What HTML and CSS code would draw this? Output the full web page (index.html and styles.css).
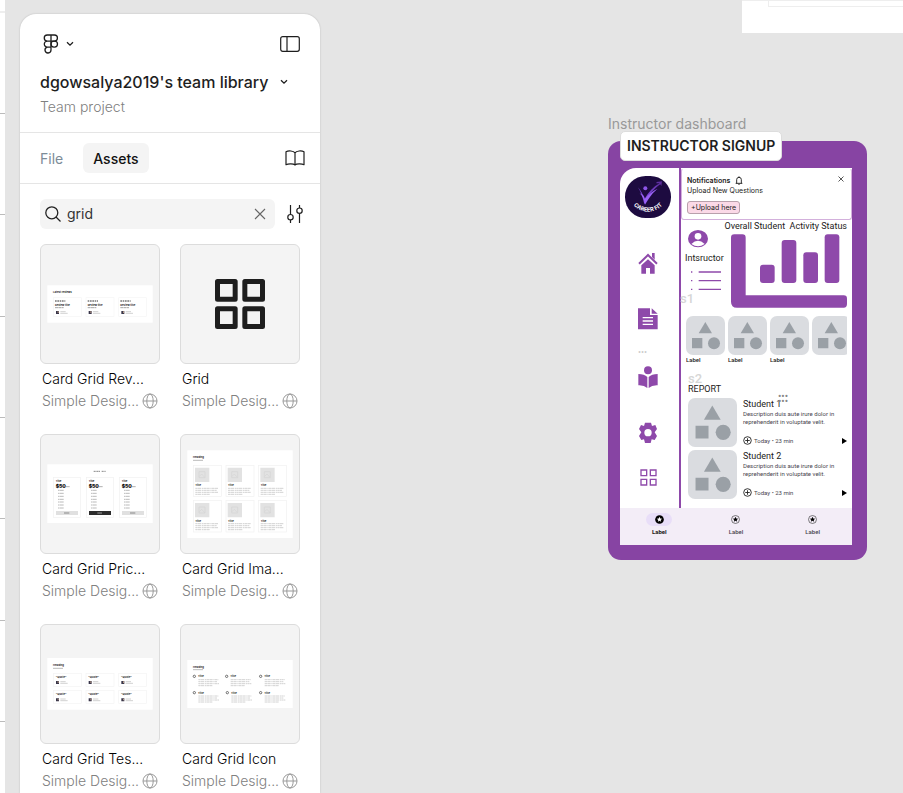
FILE: index.html
```html
<!DOCTYPE html>
<html lang="en">
<head>
<meta charset="utf-8">
<title>Team library</title>
<link rel="stylesheet" href="styles.css">
</head>
<body>
<svg class="defs" aria-hidden="true">
  <defs>
  <symbol id="chevron" viewBox="0 0 8 6"><path d="M1 1.2l3 3 3-3" fill="none" stroke="currentColor" stroke-width="1.3"/></symbol>
  <symbol id="globe" viewBox="0 0 16 16"><g fill="none" stroke="currentColor"><circle cx="8" cy="8" r="7"/><ellipse cx="8" cy="8" rx="3.2" ry="7"/><path d="M1 8h14"/></g></symbol>
  <symbol id="shapes" viewBox="0 0 117 117"><path d="M58 18l20 34H38z"/><path d="M18 66h31v31H18z"/><circle cx="84" cy="82" r="18"/></symbol>
  <symbol id="star" viewBox="0 0 26 26"><path d="M13 5l2.2 5.2 5.6.4-4.300 3.600 1.400 5.500L13 16.800l-4.900 2.900 1.400-5.500-4.300-3.600 5.600-.4z"/></symbol>
  <symbol id="plus" viewBox="0 0 26 26"><g fill="none" stroke="#222" stroke-width="2.600"><circle cx="13" cy="13" r="11"/><path d="M13 6.500v13M6.500 13h13"/></g></symbol>
  <g id="lines"><path d="M0 2h70M0 8h64M0 14h68M0 20h44" fill="none" stroke="#bbb" stroke-width="2" stroke-dasharray="7 1 10 2 4 1"/></g>
  <g id="person"><path d="M0 0h9v9H0z" fill="#39364a"/><path d="M5 1h3v5H5z" fill="#b99a84"/><path d="M13 2h16M13 7h22" stroke="#bbb" stroke-width="2"/></g>
  <g id="review"><rect width="84" height="56" fill="none" stroke="#f5f5f5" stroke-width="2"/><path d="M5 10h31" stroke="#333" stroke-width="3" stroke-dasharray="5 2"/><text x="5" y="25" class="t-title">Review title</text><path d="M5 30h26" stroke="#777" stroke-width="2" stroke-dasharray="9 1"/><use href="#person" x="8" y="40"/></g>
  <g id="price"><rect width="81" height="120" fill="none" stroke="#f1f1f1" stroke-width="2"/><text x="7" y="14" class="t-title">Title</text><text x="7" y="31" class="t-price">$50</text><path d="M37 28h12" stroke="#888" stroke-width="2"/><path d="M14 39h18M14 48h18M14 57h18M14 66h18M14 74h18M14 83h18M14 92h18" stroke="#999" stroke-width="2" stroke-dasharray="5 1 9 1"/></g>
  <g id="imagecard"><rect width="84" height="94" fill="none" stroke="#f1f1f1" stroke-width="2"/><path d="M5 7h43v43H5z" fill="#e2e2e2"/><path d="M17 19h18v18H17zM18 33l7-7 9 10" fill="none" stroke="#d5d5d5" stroke-width="2"/><text x="6" y="63" class="t-title">Title</text><use href="#lines" x="6" y="67"/></g>
  <g id="quote"><rect width="84" height="39" fill="none" stroke="#f4f4f4" stroke-width="2"/><text x="7" y="13" class="t-title">"Quote"</text><use href="#person" x="8" y="23"/></g>
  <g id="iconcard"><circle cx="4" cy="4" r="3.500" fill="none" stroke="#333" stroke-width="2"/><text x="15" y="7" class="t-title">Title</text><path d="M16 14h60M16 20h56M16 26h62M16 32h42" fill="none" stroke="#bbb" stroke-width="2" stroke-dasharray="7 1 10 2 4 1"/></g>
  </defs>
</svg>

<div class="neighbor" aria-hidden="true"></div>

<aside class="panel">
  <header class="head">
    <div class="toprow">
      <button class="icon-btn menu" aria-label="Main menu">
        <svg width="16" height="20" viewBox="0 0 16 20" fill="none" stroke="currentColor" stroke-width="1.300"><path d="M8 1H4.300a3 3 0 0 0 0 6.100H8zM8 1h3.400a3 3 0 0 1 0 6.100H8zM8 7.100H4.300a3 3 0 0 0 0 6H8zM8 13.100H4.300a3 3 0 1 0 3.700 3z"/><rect x="8" y="7.100" width="6.500" height="6" rx="3"/></svg>
        <svg width="8" height="6"><use href="#chevron"/></svg>
      </button>
      <button class="icon-btn" aria-label="Toggle sidebar">
        <svg width="20" height="16" viewBox="0 0 20 16" fill="none" stroke="currentColor" stroke-width="1.200"><rect x=".7" y=".7" width="18.600" height="14.600" rx="2"/><path d="M7 1v14"/></svg>
      </button>
    </div>
    <button class="icon-btn title">dgowsalya2019's team library <svg width="8" height="6"><use href="#chevron"/></svg></button>
    <p class="project">Team project</p>
  </header>

  <nav class="tabs">
    <button class="tab">File</button>
    <button class="tab active">Assets</button>
    <button class="icon-btn book" aria-label="Libraries">
      <svg width="20" height="16" viewBox="0 0 20 16" fill="none" stroke="currentColor" stroke-width="1.200" stroke-linejoin="round"><path d="M10 2.800C8.500.7 3.500.4 1 1.700v13c2.500-1.200 7.500-1 9 .3 1.500-1.300 6.500-1.500 9-.3v-13C16.500.4 11.500.7 10 2.800zV15"/></svg>
    </button>
  </nav>

  <div class="searchrow">
    <label class="search">
      <svg width="16" height="16" viewBox="0 0 16 16" fill="none" stroke="#222" stroke-width="1.300"><circle cx="6.800" cy="6.800" r="6"/><path d="M11 11l4.500 4.500"/></svg>
      <input type="text" value="grid" aria-label="Search assets">
      <button class="icon-btn clear" aria-label="Clear search"><svg width="12" height="12" viewBox="0 0 12 12" fill="none" stroke="currentColor" stroke-width="1.100"><path d="M1 1l10 10M11 1L1 11"/></svg></button>
    </label>
    <button class="icon-btn" aria-label="Filters">
      <svg width="16" height="18" viewBox="0 0 16 18" fill="none" stroke="currentColor" stroke-width="1.200"><path d="M3.500 0v9.500M3.500 15v3M12.500 0v3M12.500 8.500V18"/><circle cx="3.500" cy="12.200" r="2.700"/><circle cx="12.500" cy="5.700" r="2.700"/></svg>
    </button>
  </div>

  <ul class="assets">
    <li>
      <button class="thumb" aria-label="Card Grid Reviews"><svg viewBox="3 3 354 354"><rect x="22" y="124" width="316" height="112" fill="#fff"/><text x="39" y="147" class="t-title">Latest reviews</text><use href="#review" x="40" y="161"/><use href="#review" x="138" y="161"/><use href="#review" x="236" y="161"/></svg></button>
      <p class="name">Card Grid Rev...</p>
      <p class="lib">Simple Desig... <svg width="16" height="16"><use href="#globe"/></svg></p>
    </li>
    <li>
      <button class="thumb" aria-label="Grid"><svg viewBox="3 3 354 354"><g fill="none" stroke="#1e1e1e" stroke-width="15" stroke-linejoin="round"><path d="M112.500 112.500h53v53h-53zM194.500 112.500h53v53h-53zM112.500 194.500h53v53h-53zM194.500 194.500h53v53h-53z"/></g></svg></button>
      <p class="name">Grid</p>
      <p class="lib">Simple Desig... <svg width="16" height="16"><use href="#globe"/></svg></p>
    </li>
    <li>
      <button class="thumb" aria-label="Card Grid Pricing"><svg viewBox="3 3 354 354"><rect x="22" y="91" width="316" height="176" fill="#fff"/><path d="M161 112h19M185 112h12" stroke="#888" stroke-width="3" stroke-dasharray="4 1"/><use href="#price" x="40" y="130"/><use href="#price" x="139" y="130"/><use href="#price" x="238" y="130"/><path d="M48 231h66v12H48zM246 231h66v12h-66z" fill="#e0e0e0"/><path d="M147 231h66v12h-66z" fill="#2c2c2c"/><path d="M72 237h16M270 237h16" stroke="#888" stroke-width="3"/><path d="M172 237h14" stroke="#999" stroke-width="3"/></svg></button>
      <p class="name">Card Grid Pric...</p>
      <p class="lib">Simple Desig... <svg width="16" height="16"><use href="#globe"/></svg></p>
    </li>
    <li>
      <button class="thumb" aria-label="Card Grid Image"><svg viewBox="3 3 354 354"><rect x="22" y="49" width="316" height="263" fill="#fff"/><text x="39" y="73" class="t-title">Heading</text><path d="M39 79h30" stroke="#999" stroke-width="2"/><use href="#imagecard" x="40" y="94"/><use href="#imagecard" x="138" y="94"/><use href="#imagecard" x="236" y="94"/><use href="#imagecard" x="40" y="200"/><use href="#imagecard" x="138" y="200"/><use href="#imagecard" x="236" y="200"/></svg></button>
      <p class="name">Card Grid Ima...</p>
      <p class="lib">Simple Desig... <svg width="16" height="16"><use href="#globe"/></svg></p>
    </li>
    <li>
      <button class="thumb" aria-label="Card Grid Testimonials"><svg viewBox="3 3 354 354"><rect x="22" y="102" width="316" height="155" fill="#fff"/><text x="39" y="127" class="t-title">Heading</text><path d="M39 133h30" stroke="#999" stroke-width="2"/><use href="#quote" x="40" y="148"/><use href="#quote" x="138" y="148"/><use href="#quote" x="236" y="148"/><use href="#quote" x="40" y="200"/><use href="#quote" x="138" y="200"/><use href="#quote" x="236" y="200"/></svg></button>
      <p class="name">Card Grid Tes...</p>
      <p class="lib">Simple Desig... <svg width="16" height="16"><use href="#globe"/></svg></p>
    </li>
    <li>
      <button class="thumb" aria-label="Card Grid Icon"><svg viewBox="3 3 354 354"><rect x="22" y="108" width="316" height="144" fill="#fff"/><text x="39" y="131" class="t-title">Heading</text><path d="M39 137h30" stroke="#999" stroke-width="2"/><use href="#iconcard" x="39" y="153"/><use href="#iconcard" x="136" y="153"/><use href="#iconcard" x="238" y="153"/><use href="#iconcard" x="39" y="202"/><use href="#iconcard" x="138" y="202"/><use href="#iconcard" x="238" y="202"/></svg></button>
      <p class="name">Card Grid Icon</p>
      <p class="lib">Simple Desig... <svg width="16" height="16"><use href="#globe"/></svg></p>
    </li>
  </ul>
</aside>

<main class="canvas">
  <div class="sheet"><div class="sheet-edge"></div></div>

  <section class="frame">
    <h2 class="frame-label">Instructor dashboard</h2>
    <strong class="tag">INSTRUCTOR SIGNUP</strong>
    <div class="device">
      <div class="screen">
        <div class="side">
          <svg class="logo" width="46" height="42" viewBox="0 0 138 126"><defs><linearGradient id="lg" x1="0" y1="1" x2="1" y2="0"><stop offset="0" stop-color="#8f55ff"/><stop offset="1" stop-color="#5b2b98"/></linearGradient></defs><rect width="138" height="126" rx="62" fill="#1d0b40"/><path d="M39 34c8 10 15 20 19 36 12-22 28-38 46-48l-10 0 1-4 16-2-2 14-3-5c-20 14-36 32-48 60-4-20-10-36-19-51z" fill="url(#lg)"/><path d="M44 52c9 3 14 8 16 17 12-16 24-24 38-31-14 11-24 24-38 48-2-16-7-25-16-34z" fill="#9a62f5"/><circle cx="61" cy="37" r="6" fill="#8e55e8"/><path id="logo-arc" d="M15 58A54 49 0 0 0 123 58" fill="none"/><text class="logo-text" text-anchor="middle"><textPath href="#logo-arc" startOffset="50%">CAREER FIT</textPath></text></svg>
          <ul class="rail">
            <li><svg width="20" height="22" viewBox="0 0 60 66"><path d="M30 22l20 18v25H36V48H24v17H10V40z"/><path d="M3 35L30 9l27 26" fill="none" stroke="#8e49aa" stroke-width="6"/><path d="M42 3h8v20l-8-8z"/></svg></li>
            <li><svg width="20" height="22" viewBox="0 0 60 66"><path d="M0 1h36v20h23v43H0z"/><path d="M41 1l18 16H41z"/><path d="M14 29h31M14 39h31M14 49h31" stroke="#fff" stroke-width="4"/></svg></li>
            <li><svg width="20" height="22" viewBox="0 0 60 66"><circle cx="30" cy="13" r="12"/><path d="M1 24q18 0 27 9v33Q18 57 1 58zM59 24q-18 0-27 9v33q10-9 27-8z"/></svg><span class="dots">•••</span></li>
            <li><svg width="18" height="22" viewBox="0 0 54 66"><path d="M18 2h18l3 10 10-3 5 12-7 10 7 11-7 12-9-2-3 11H18l-3-11-8 2-7-12 7-11-7-10 6-12 9 3z"/><circle cx="27" cy="32" r="11" fill="#fff"/></svg></li>
            <li><svg width="17" height="17" viewBox="0 0 51 51" fill="none" stroke="#8e49aa" stroke-width="4"><path d="M3 3h17v17H3zM31 3h17v17H31zM3 31h17v17H3zM31 31h17v17H31z"/></svg></li>
          </ul>
        </div>

        <div class="content">
          <div class="notice">
            <h3>Notifications <svg width="8" height="9" viewBox="0 0 24 27" fill="none" stroke="#111" stroke-width="2.600"><path d="M2 22h20M5 22V11a7 7 0 0 1 14 0v11M12 1v3M10 25h4"/></svg></h3>
            <p>Upload New Questions</p>
            <button class="upload">+Upload here</button>
            <button class="icon-btn dismiss" aria-label="Dismiss"><svg width="6" height="6" viewBox="0 0 12 12" fill="none" stroke="#444" stroke-width="1.800"><path d="M1 1l10 10M11 1L1 11"/></svg></button>
          </div>
          <div class="overview">
            <div class="profile">
              <svg width="20" height="18" viewBox="0 0 60 54"><ellipse cx="30" cy="26" rx="30" ry="26" fill="#8e49aa"/><circle cx="30" cy="19" r="10" fill="#fff"/><path d="M10 42q20-20 40 0-20 14-40 0z" fill="#fff"/></svg>
              <p>Intsructor</p>
              <svg width="30" height="20" viewBox="0 0 90 60" stroke="#8e49aa" stroke-width="4"><path d="M0 3h4M23 3h67M0 29h4M23 29h67M0 55h4M23 55h67"/></svg>
            </div>
            <figure class="chart">
              <figcaption>Overall Student &nbsp;Activity Status</figcaption>
              <svg width="116" height="74" viewBox="0 0 348 222" fill="#8e49aa"><path d="M10 1h24q10 0 10 10v173h294q10 0 10 10v16q0 11-10 11H18Q0 221 0 203V11Q0 1 10 1z"/><rect x="87" y="92" width="44" height="55" rx="9"/><rect x="152" y="18" width="44" height="129" rx="9"/><rect x="217" y="55" width="44" height="92" rx="9"/><rect x="281" y="1" width="44" height="146" rx="9"/></svg>
            </figure>
            <span class="ghost g1">s1</span>
          </div>
          <ul class="tiles">
            <li><svg><use href="#shapes"/></svg><p>Label</p></li>
            <li><svg><use href="#shapes"/></svg><p>Label</p></li>
            <li><svg><use href="#shapes"/></svg><p>Label</p></li>
            <li><svg><use href="#shapes"/></svg></li>
          </ul>
          <div class="report">
            <span class="ghost g2">s2</span>
            <h3>REPORT</h3>
            <article>
              <svg class="pic"><use href="#shapes"/></svg>
              <div class="info">
                <h4>Student 1</h4>
                <p>Description duis aute irure dolor in reprehenderit in voluptate velit.</p>
                <div class="meta"><svg width="9" height="9"><use href="#plus"/></svg><span>Today • 23 min</span><svg class="play" width="5" height="6" viewBox="0 0 5 6"><path d="M0 0l5 3-5 3z"/></svg></div>
              </div>
              <span class="handle">•••<br>•••</span>
            </article>
            <article>
              <svg class="pic"><use href="#shapes"/></svg>
              <div class="info">
                <h4>Student 2</h4>
                <p>Description duis aute irure dolor in reprehenderit in voluptate velit.</p>
                <div class="meta"><svg width="9" height="9"><use href="#plus"/></svg><span>Today • 23 min</span><svg class="play" width="5" height="6" viewBox="0 0 5 6"><path d="M0 0l5 3-5 3z"/></svg></div>
              </div>
            </article>
          </div>
        </div>

        <nav class="bottom">
          <a href="#" class="on"><span class="chip"><svg width="9" height="9" viewBox="0 0 26 26"><circle cx="13" cy="13" r="12.500"/><use href="#star" fill="#fff"/></svg></span>Label</a>
          <a href="#"><span class="chip"><svg width="9" height="9" viewBox="0 0 26 26"><circle cx="13" cy="13" r="11.500" fill="none" stroke="#444" stroke-width="2"/><use href="#star"/></svg></span>Label</a>
          <a href="#"><span class="chip"><svg width="9" height="9" viewBox="0 0 26 26"><circle cx="13" cy="13" r="11.500" fill="none" stroke="#444" stroke-width="2"/><use href="#star"/></svg></span>Label</a>
        </nav>
      </div>
    </div>
  </section>
</main>
</body>
</html>
```

FILE: styles.css
```css
* { box-sizing: border-box; margin: 0; padding: 0; }
html, body { height: 100%; }
body {
  display: flex;
  overflow: hidden;
  background: #e5e5e5;
  color: #1e1e1e;
  font-family: Inter, "Liberation Sans", sans-serif;
}
ul { list-style: none; }
button { font: inherit; color: inherit; border: 0; background: none; }
svg { display: block; flex: none; }
.defs { position: absolute; width: 0; height: 0; }
.icon-btn { display: flex; align-items: center; }

/* edge of the neighbouring frame */
.neighbor {
  flex: 0 0 5px;
  background:
    linear-gradient(#fff 0 11px, #eee 11px 13px, transparent 13px),
    repeating-linear-gradient(#fff 0 113px, #bbb 113px 114px, #fff 114px 214px, #bbb 214px 215px, #fff 215px 316px, #bbb 316px 317px, #fff 317px 417px, #bbb 417px 418px, #fff 418px 518px, #bbb 518px 519px, #fff 519px 620px, #bbb 620px 621px, #fff 621px 721px, #bbb 721px 722px, #fff 722px 822px);
}

/* left panel */
.panel {
  flex: 0 0 300px;
  margin: 14px 0 0 15px;
  background: #fff;
  border-radius: 16px 16px 0 0;
  box-shadow: 0 0 2px rgba(0, 0, 0, .2);
  overflow: hidden;
}
.head { padding: 20px 20px 15px; border-bottom: 1px solid #e5e5e5; }
.toprow { display: flex; justify-content: space-between; align-items: center; padding-left: 3px; }
.menu { gap: 7px; }
.title { gap: 12px; margin-top: 16px; font-size: 16px; font-weight: 500; line-height: 24px; white-space: nowrap; }
.project { margin-top: 3px; font-size: 14px; font-weight: 300; line-height: 20px; color: #808080; }

.tabs { display: flex; align-items: center; height: 51px; padding: 0 15px 0 10px; border-bottom: 1px solid #e5e5e5; }
.tab { height: 30px; padding: 0 10px; font-size: 14px; color: #7c8c98; border-radius: 6px; }
.tab.active { margin-left: 10px; background: #f4f4f4; color: #111; font-weight: 500; }
.book { margin-left: auto; }

.searchrow { display: flex; align-items: center; gap: 12px; padding: 15px 17px 15px 20px; }
.search { display: flex; flex: 1; align-items: center; gap: 6px; height: 30px; min-width: 0; padding: 0 9px 0 5px; border-radius: 6px; background: #f4f4f4; }
.search input { flex: 1; min-width: 0; border: 0; outline: 0; background: none; color: #333; font: 14px/20px Inter, sans-serif; }
.clear { color: #666; }

.assets { display: grid; grid-template-columns: 120px 120px; column-gap: 20px; row-gap: 10px; padding: 0 20px; }
.assets li { height: 180px; }
.thumb { display: block; width: 120px; height: 120px; border: 1px solid #dcdcdc; border-radius: 6px; background: #f4f4f4; overflow: hidden; }
.name, .lib { display: flex; align-items: center; justify-content: space-between; padding: 0 2px; font-size: 14px; font-weight: 300; line-height: 22px; white-space: nowrap; }
.name { margin-top: 4px; color: #000; }
.lib { color: #808080; }
.lib svg { color: #999; }
.t-title { font: 700 8px Inter, sans-serif; fill: #222; }
.t-price { font: 900 15px Inter, sans-serif; fill: #111; }

/* free canvas */
.canvas { position: relative; flex: 1; min-width: 0; }
.sheet { position: absolute; left: 422px; right: 0; top: 0; height: 33px; background: #fff; border-top: 1px solid #eee; }
.sheet-edge { height: 6px; margin-left: 26px; border: solid #eee; border-width: 0 0 1px 1px; }

.frame { position: absolute; left: 288px; top: 115px; width: 259px; }
.frame-label { font-size: 14px; line-height: 18px; font-weight: 400; color: #999; white-space: nowrap; }
.tag { position: absolute; left: 12px; top: 16px; padding: 0 6px; border: 1px solid #ddd; border-radius: 5px; background: #fff; font: 600 14px/28px Inter, sans-serif; white-space: nowrap; }
.device { margin-top: 8px; padding: 27px 15px 15px 12px; border-radius: 13px; background: #8744a3; }
.screen { display: grid; grid-template-columns: 61px minmax(0, 1fr); background: #fff; border-top-left-radius: 16px; font-family: Roboto, sans-serif; color: #1d1b20; overflow: hidden; }

.side { padding: 8px 8px 0 5px; border-right: 2px solid #8e49aa; }
.logo-text { font: 700 17px Inter, sans-serif; fill: #fff; }
.rail { display: grid; grid-template-rows: 56px 56px 60px 52px 36px; margin-top: 17px; fill: #8e49aa; }
.rail li { position: relative; display: grid; place-items: center; }
.dots { position: absolute; left: 13px; top: 1px; font-size: 9px; line-height: 9px; color: #ccc; }

.notice { position: relative; height: 52px; padding: 7px 6px 0 5px; border: 1px solid #d3b0dc; border-top-color: #fff; border-radius: 3px; font: 7px/9px Inter, sans-serif; }
.notice h3 { display: flex; gap: 5px; font-size: 7px; line-height: 9px; font-weight: 600; }
.notice p { margin-top: 1px; }
.upload { height: 13px; margin-top: 6px; padding: 0 3px; border: 1px solid #b9a0ac; border-radius: 3px; background: #fbd9e7; font-size: 7px; line-height: 9px; }
.dismiss { position: absolute; right: 7px; top: 7px; }

.overview { position: relative; display: flex; justify-content: space-between; padding: 0 5px 0 4px; }
.profile { padding-top: 10px; font-size: 9px; line-height: 12px; }
.profile > svg:first-child { margin-left: 3px; }
.profile p { width: 40px; margin: 4px 0 7px; }
.profile > svg:last-child { margin-left: 6px; }
.chart figcaption { display: flex; justify-content: flex-end; width: 116px; font-size: 9px; line-height: 12px; white-space: nowrap; }
.chart svg { margin-top: 2px; }
.ghost { position: absolute; color: #d6d6d6; font: 500 13px/14px Roboto, sans-serif; }
.g1 { left: -1px; bottom: 2px; }
.g2 { left: 7px; top: 8px; }

.tiles { display: flex; gap: 3px; height: 48px; margin: 8px 5px 0; overflow: hidden; }
.tiles li { flex: 0 0 39px; font-size: 6px; line-height: 8px; font-weight: 500; }
.tiles svg { width: 39px; height: 39px; border-radius: 7px; background: #dadce0; fill: #9aa0a6; }
.tiles p { margin-top: 1px; }

.report { position: relative; padding: 19px 5px 9px 7px; }
.report h3 { position: relative; font-size: 9px; line-height: 12px; font-weight: 400; }
.report article { position: relative; display: flex; gap: 6px; margin-top: 3px; }
.pic { width: 49px; height: 49px; border-radius: 7px; background: #dadce0; fill: #9aa0a6; }
.info { flex: 1; min-width: 0; }
.info h4 { font-size: 9px; line-height: 12px; font-weight: 400; }
.info p { font-size: 6px; line-height: 8px; color: #49454f; }
.meta { display: flex; align-items: center; gap: 2px; margin-top: 10px; font-size: 6px; line-height: 9px; color: #49454f; }
.play { margin-left: auto; }
.handle { position: absolute; left: 90px; top: -4px; font-size: 10px; line-height: 5px; color: #888; }

.bottom { grid-column: 1 / -1; display: grid; grid-template-columns: repeat(3, 1fr); height: 37px; padding: 5px 1px 0; background: #f3edf7; }
.bottom a { display: flex; flex-direction: column; align-items: center; gap: 2px; color: #49454f; font-size: 6px; line-height: 8px; font-weight: 500; text-decoration: none; }
.chip { display: grid; place-items: center; width: 26px; height: 13px; border-radius: 7px; }
.on .chip { background: #e8def8; }
.bottom .on { color: #1d1b20; font-weight: 700; }
```
